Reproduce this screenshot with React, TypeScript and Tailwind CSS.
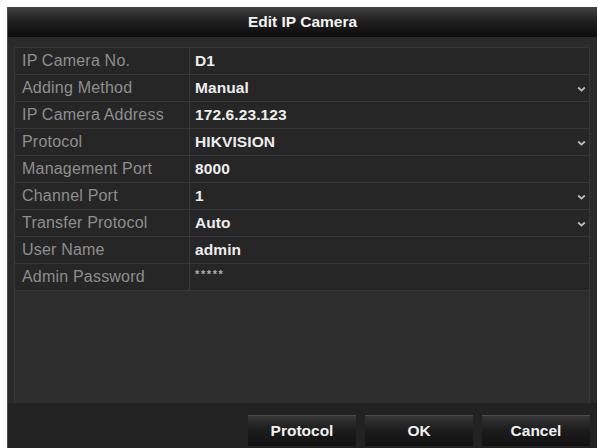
import React from "react";

const rows: { label: string; value: string; dropdown?: boolean; password?: boolean }[] = [
  { label: "IP Camera No.", value: "D1" },
  { label: "Adding Method", value: "Manual", dropdown: true },
  { label: "IP Camera Address", value: "172.6.23.123" },
  { label: "Protocol", value: "HIKVISION", dropdown: true },
  { label: "Management Port", value: "8000" },
  { label: "Channel Port", value: "1", dropdown: true },
  { label: "Transfer Protocol", value: "Auto", dropdown: true },
  { label: "User Name", value: "admin" },
  { label: "Admin Password", value: "*****", password: true },
];

function Chevron() {
  return (
    <svg width="9" height="6" viewBox="0 0 9 6" className="absolute right-[3px] top-[11px]">
      <path d="M1.2 1.5 L4.5 4.6 L7.8 1.5" stroke="#bdbdbd" strokeWidth="1.8" fill="none" />
    </svg>
  );
}

function Btn({ children }: { children: React.ReactNode }) {
  return (
    <div className="w-[108px] h-[30px] flex items-center justify-center text-[15.5px] font-bold text-[#f0f0f0] bg-gradient-to-b from-[#363636] via-[#1c1c1c] to-[#121212] border-t border-[#4a4a4a] shadow-[0_1px_0_#111]">
      {children}
    </div>
  );
}

export default function App() {
  return (
    <div
      className="w-[598px] h-[448px] bg-white pl-[7px] pt-[7px] pr-[1px] overflow-hidden"
      style={{ fontFamily: '"Liberation Sans", Arial, sans-serif' }}
    >
      <div className="h-full flex flex-col bg-[#2b2b2b] border-l border-[#4a4a4a]">
        <div className="h-[30px] shrink-0 flex items-center justify-center text-[#f4f4f4] font-bold text-[15.5px] bg-gradient-to-b from-[#424242] via-[#1e1e1e] to-[#0c0c0c]">
          Edit IP Camera
        </div>
        <div className="flex-1 flex flex-col pl-[6px] pr-[7px] pt-[10px]">
          <div className="flex-1 flex flex-col border border-[#363636] border-b-0 bg-[#2d2d2d]">
            {rows.map((r) => (
              <div key={r.label} className="h-[27px] shrink-0 flex border-b border-[#383838] bg-[#262626]">
                <div className="w-[175px] shrink-0 border-r border-[#3a3a3a] pl-[7px] flex items-center text-[16px] text-[#8e8e8e] tracking-[0.2px]">
                  {r.label}
                </div>
                <div className="flex-1 relative pl-[5px] flex items-center">
                  {r.password ? (
                    <span className="text-[11px] text-[#b0b0b0] font-bold tracking-[1.6px] -mt-[5px]">*****</span>
                  ) : (
                    <span className="text-[15.5px] font-bold text-[#ededed] tracking-[0.1px]">{r.value}</span>
                  )}
                  {r.dropdown && <Chevron />}
                </div>
              </div>
            ))}
          </div>
        </div>
        <div className="h-[45px] shrink-0 bg-[#222222] flex justify-end gap-[9px] pr-[7px] pt-[12px]">
          <Btn>Protocol</Btn>
          <Btn>OK</Btn>
          <Btn>Cancel</Btn>
        </div>
      </div>
    </div>
  );
}
